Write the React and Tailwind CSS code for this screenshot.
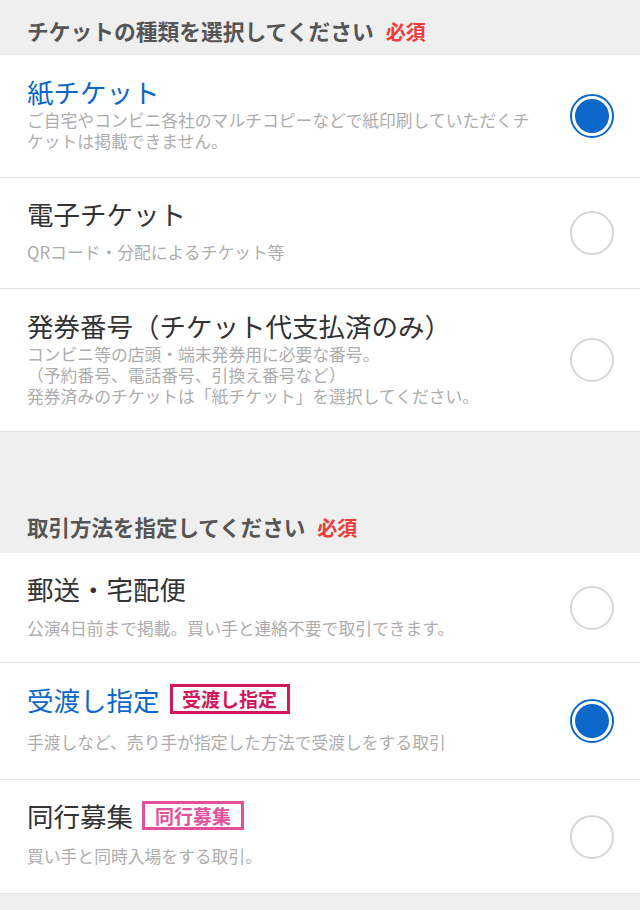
import React from "react";

const font = { fontFamily: '"Noto Sans CJK JP", "Noto Sans", sans-serif' };

function Radio({ checked }) {
  if (checked) {
    return (
      <div className="w-[44px] h-[44px] rounded-full border-2 border-[#0b67c9] p-[3px] shrink-0">
        <div className="w-full h-full rounded-full bg-[#0b67c9]" />
      </div>
    );
  }
  return <div className="w-[44px] h-[44px] rounded-full border-2 border-[#d6d6d6] shrink-0" />;
}

function Row({ title, checked, desc, badge, rowCls, padCls, descCls }) {
  return (
    <div className={`flex items-center bg-white border-b border-[#e3e3e3] pl-[27px] pr-[26px] ${rowCls}`}>
      <div className={`flex-1 min-w-0 self-start ${padCls}`}>
        <div className="flex items-center">
          <span className={`text-[26.5px] leading-[37px] ${checked ? "text-[#0b67c9]" : "text-[#333333]"}`}>{title}</span>
          {badge}
        </div>
        <div className={`text-[16.8px] leading-[21px] text-[#adadad] ${descCls}`}>
          {desc}
        </div>
      </div>
      <Radio checked={checked} />
    </div>
  );
}

export default function App() {
  return (
    <div className="w-[640px] h-[910px] bg-[#efefef] overflow-hidden" style={font}>
      <div className="h-[55px] flex items-center pl-[27px] pt-[8px]">
        <span className="text-[21.75px] font-bold text-[#555555]">チケットの種類を選択してください</span>
        <span className="text-[20px] font-bold text-[#f23a3a] ml-[12px]">必須</span>
      </div>
      <Row
        title="紙チケット"
        checked
        rowCls="h-[123px]"
        padCls="pt-[17.5px]"
        descCls="mt-[0px]"
        desc={<>ご自宅やコンビニ各社のマルチコピーなどで紙印刷していただくチ<br />ケットは掲載できません。</>}
      />
      <Row
        title="電子チケット"
        rowCls="h-[111px]"
        padCls="pt-[16.5px]"
        descCls="mt-[10px]"
        desc="QRコード・分配によるチケット等"
      />
      <Row
        title="発券番号（チケット代支払済のみ）"
        rowCls="h-[143px]"
        padCls="pt-[17.5px]"
        descCls="mt-[0px]"
        desc={<>コンビニ等の店頭・端末発券用に必要な番号。<br />（予約番号、電話番号、引換え番号など）<br />発券済みのチケットは「紙チケット」を選択してください。</>}
      />
      <div className="h-[121px] flex items-end pl-[27px] pb-[10px]">
        <span className="text-[21.5px] font-bold text-[#555555]">取引方法を指定してください</span>
        <span className="text-[20px] font-bold text-[#f23a3a] ml-[12px]">必須</span>
      </div>
      <Row
        title="郵送・宅配便"
        rowCls="h-[110px]"
        padCls="pt-[16.5px]"
        descCls="mt-[11px]"
        desc="公演4日前まで掲載。買い手と連絡不要で取引できます。"
      />
      <Row
        title="受渡し指定"
        checked
        rowCls="h-[117px]"
        padCls="pt-[17.5px]"
        descCls="mt-[14px]"
        badge={
          <span className="ml-[10px] border-[3px] border-[#d4165c] text-[#d4165c] text-[19px] font-bold leading-[24px] px-[9.5px]">受渡し指定</span>
        }
        desc="手渡しなど、売り手が指定した方法で受渡しをする取引"
      />
      <Row
        title="同行募集"
        rowCls="h-[114px]"
        padCls="pt-[16.5px]"
        descCls="mt-[12px]"
        badge={
          <span className="ml-[9px] border-[3px] border-[#e2509a] text-[#e2509a] text-[19px] font-bold leading-[23px] px-[10px]">同行募集</span>
        }
        desc="買い手と同時入場をする取引。"
      />
    </div>
  );
}
